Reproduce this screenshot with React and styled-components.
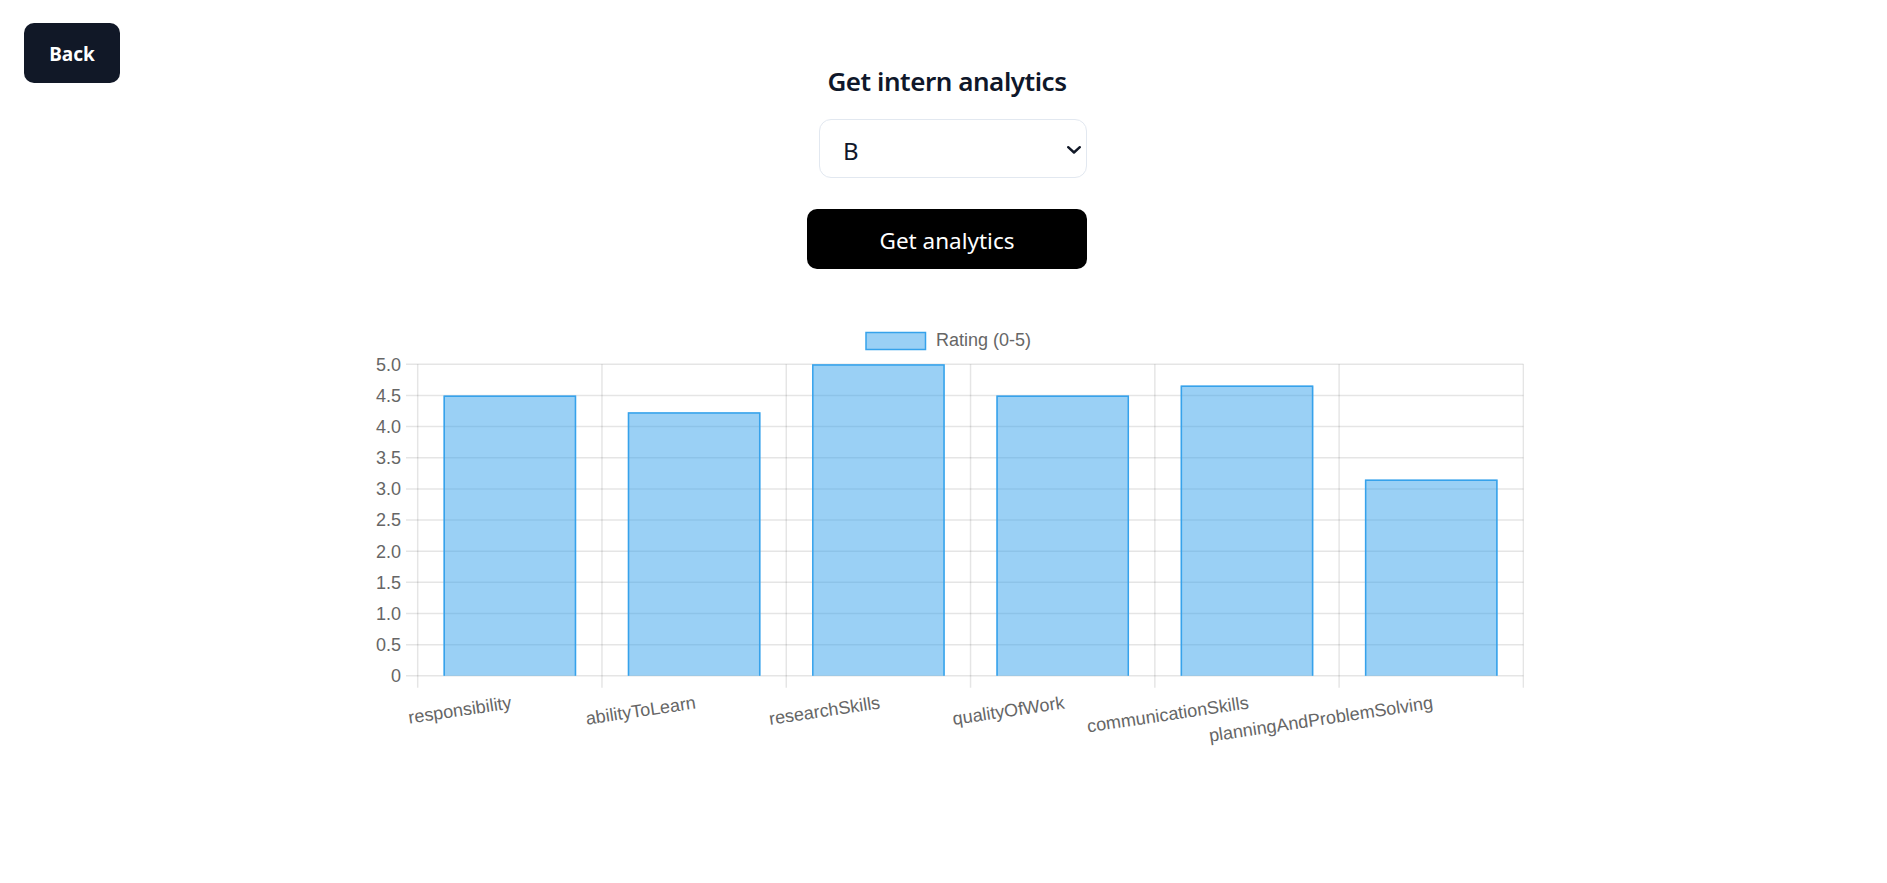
import React from 'react';
import styled, { createGlobalStyle } from 'styled-components';

const GlobalStyle = createGlobalStyle`
  html, body {
    margin: 0;
    padding: 0;
    background: #ffffff;
  }
  body {
    font-family: "Noto Sans", "Open Sans", sans-serif;
  }
`;

const Page = styled.div`
  display: grid;
  grid-template-columns: 1fr auto 1fr;
  min-height: 100vh;
`;

const BackButton = styled.button`
  justify-self: start;
  align-self: start;
  margin: 23px 0 0 24px;
  width: 96px;
  height: 60px;
  padding: 2px 0 0;
  border: none;
  border-radius: 10px;
  background: #111827;
  color: #ffffff;
  font-family: "Noto Sans", sans-serif;
  font-weight: 700;
  font-size: 19px;
  cursor: pointer;
`;

const Main = styled.main`
  grid-column: 2;
  display: flex;
  flex-direction: column;
  align-items: center;
  padding-left: 7px;
`;

const Title = styled.h1`
  margin: 63px 0 0;
  font-size: 26px;
  line-height: 37px;
  font-weight: 600;
  letter-spacing: -0.45px;
  color: #0f172a;
`;

const Form = styled.form`
  display: flex;
  flex-direction: column;
  width: 280px;
  margin-top: 19px;
`;

const SelectWrap = styled.div`
  position: relative;
  align-self: flex-end;
  width: 268px;
  height: 59px;
`;

const Select = styled.select`
  appearance: none;
  box-sizing: border-box;
  width: 100%;
  height: 100%;
  padding: 4px 0 0 23px;
  border: 1.5px solid #e2e8f0;
  border-radius: 12px;
  background: #ffffff;
  color: #0f172a;
  font-family: "Noto Sans", sans-serif;
  font-size: 24px;
  outline: none;
`;

const Chevron = styled.svg`
  position: absolute;
  right: 6px;
  top: 27px;
  pointer-events: none;
`;

const SubmitButton = styled.button`
  margin-top: 31px;
  width: 280px;
  height: 60px;
  padding: 2px 0 0;
  border: none;
  border-radius: 10px;
  background: #000000;
  color: #ffffff;
  font-family: "Noto Sans", sans-serif;
  font-size: 22.5px;
  cursor: pointer;
`;

const ChartSvg = styled.svg`
  display: block;
  margin-top: 51px;
  font-family: "Liberation Sans", Arial, sans-serif;
`;

const ratings = [
  { label: 'responsibility', value: 4.5 },
  { label: 'abilityToLearn', value: 4.23 },
  { label: 'researchSkills', value: 5 },
  { label: 'qualityOfWork', value: 4.5 },
  { label: 'communicationSkills', value: 4.66 },
  { label: 'planningAndProblemSolving', value: 3.15 },
];

// chart geometry, in page pixels (the group is shifted back by the svg origin)
const OX = 370;
const OY = 320;
const L = 417.7;
const R = 1523.4;
const T = 364.3;
const B = 675.8;
const colW = (R - L) / ratings.length;
const scale = (B - T) / 5;
const GRID = 'rgba(0,0,0,0.1)';
const FILL = 'rgba(54,162,235,0.5)';
const BORDER = 'rgb(54,162,235)';
const TEXT = '#666666';

function RatingChart() {
  const ticks = [];
  for (let i = 0; i <= 10; i++) ticks.push(i * 0.5);

  return (
    <ChartSvg width="1154" height="440" viewBox="0 0 1154 440">
      <g transform={`translate(${-OX}, ${-OY})`}>
        {/* legend */}
        <rect x="866" y="332.5" width="59.5" height="17" fill={FILL} stroke={BORDER} strokeWidth="1.5" />
        <text x="936" y="339.5" dy="0.35em" fontSize="18" fill={TEXT}>Rating (0-5)</text>

        {/* horizontal grid + y labels */}
        {ticks.map((v) => {
          const y = B - v * scale;
          return (
            <g key={v}>
              <line x1="406" x2={R} y1={y} y2={y} stroke={GRID} strokeWidth="1.5" />
              <text x="401" y={y} dy="0.35em" textAnchor="end" fontSize="18" fill={TEXT}>
                {v === 0 ? '0' : v.toFixed(1)}
              </text>
            </g>
          );
        })}

        {/* vertical grid */}
        {ratings.concat([null]).map((_, i) => {
          const x = L + i * colW;
          return <line key={i} x1={x} x2={x} y1={T} y2={B + 12} stroke={GRID} strokeWidth="1.5" />;
        })}

        {/* bars */}
        {ratings.map((r, i) => {
          const c = L + colW * (i + 0.5);
          const w = colW * 0.72;
          const x = c - w / 2;
          const top = B - r.value * scale;
          return (
            <g key={r.label}>
              <rect x={x} y={top} width={w} height={B - top} fill={FILL} />
              <path
                d={`M${x + 0.75} ${B} V${top + 0.75} H${x + w - 0.75} V${B}`}
                fill="none"
                stroke={BORDER}
                strokeWidth="1.5"
              />
            </g>
          );
        })}

        {/* x labels */}
        {ratings.map((r, i) => {
          const c = L + colW * (i + 0.5);
          return (
            <text
              key={r.label}
              transform={`translate(${c}, 692.5) rotate(-8.5)`}
              x="0"
              y="0"
              dy="16"
              textAnchor="end"
              fontSize="18"
              fill={TEXT}
            >
              {r.label}
            </text>
          );
        })}
      </g>
    </ChartSvg>
  );
}

export default function App() {
  return (
    <>
      <GlobalStyle />
      <Page>
        <BackButton type="button">Back</BackButton>
        <Main>
          <Title>Get intern analytics</Title>
          <Form onSubmit={(e) => e.preventDefault()}>
            <SelectWrap>
              <Select defaultValue="B">
                <option value="A">A</option>
                <option value="B">B</option>
                <option value="C">C</option>
              </Select>
              <Chevron width="14" height="8" viewBox="0 0 14 8">
                <path d="M1.2 1.2 L7 6.5 L12.8 1.2" fill="none" stroke="#111827" strokeWidth="2.4" strokeLinecap="round" strokeLinejoin="round" />
              </Chevron>
            </SelectWrap>
            <SubmitButton type="submit">Get analytics</SubmitButton>
          </Form>
          <RatingChart />
        </Main>
      </Page>
    </>
  );
}
